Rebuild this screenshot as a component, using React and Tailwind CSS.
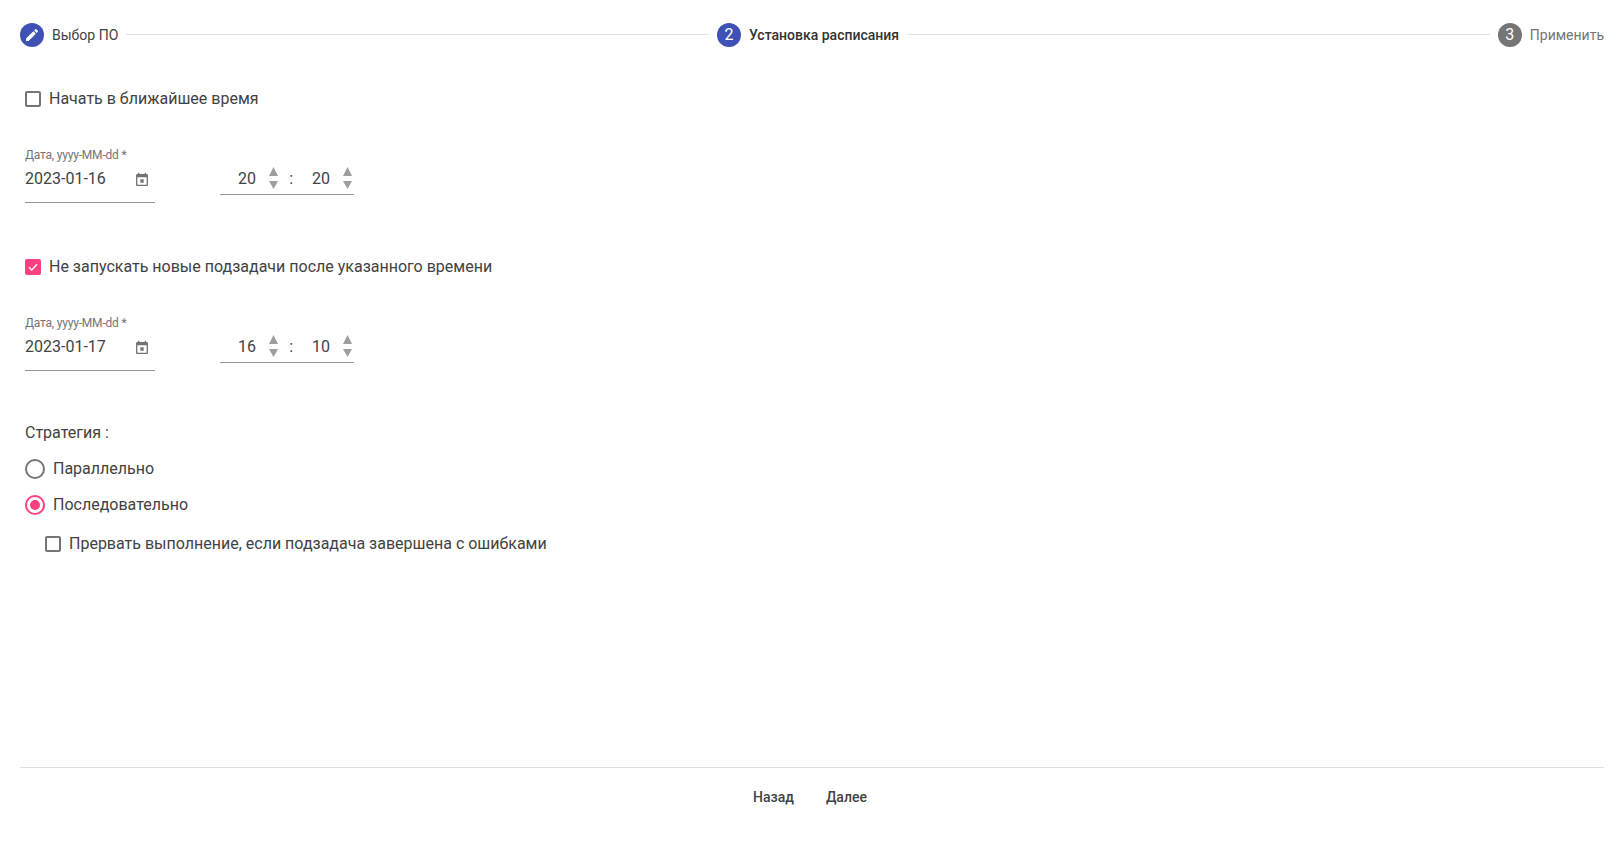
import React from 'react';

const font = { fontFamily: 'Roboto, sans-serif' };

const Step = ({ num, label, state }) => (
  <div className="flex items-center shrink-0">
    <div
      className={`w-6 h-6 rounded-full flex items-center justify-center text-white text-base ${
        state === 'todo' ? 'bg-[#757575]' : 'bg-[#3f51b5]'
      }`}
    >
      {num ? (
        num
      ) : (
        <svg width="16" height="16" viewBox="0 0 24 24" fill="#fff">
          <path d="M3 17.25V21h3.75L17.81 9.94l-3.75-3.75L3 17.25zM20.71 7.04c.39-.39.39-1.02 0-1.41l-2.34-2.34c-.39-.39-1.02-.39-1.41 0l-1.83 1.83 3.75 3.75 1.83-1.83z" />
        </svg>
      )}
    </div>
    <span
      className={`ml-2 text-sm leading-6 ${
        state === 'active'
          ? 'font-medium text-[#333333]'
          : state === 'todo'
            ? 'text-[#757575]'
            : 'text-[#424242]'
      }`}
    >
      {label}
    </span>
  </div>
);

const Checkbox = ({ checked, label }) => (
  <div className="flex items-center h-6">
    {checked ? (
      <div className="w-4 h-4 rounded-[2px] bg-[#ff4081] flex items-center justify-center">
        <svg width="12" height="12" viewBox="0 0 24 24" fill="none" stroke="#fff" strokeWidth="2.5">
          <path d="M4 12.5l5.5 5.5L20 6.5" />
        </svg>
      </div>
    ) : (
      <div className="w-4 h-4 rounded-[2px] border-2 border-[#757575]" />
    )}
    <span className="ml-2 text-base text-[#424242]">{label}</span>
  </div>
);

const Radio = ({ checked, label, className }) => (
  <div className={`flex items-center h-6 ${className}`}>
    <div
      className={`w-5 h-5 rounded-full border-2 flex items-center justify-center ${
        checked ? 'border-[#ff4081]' : 'border-[#757575]'
      }`}
    >
      {checked && <div className="w-2.5 h-2.5 rounded-full bg-[#ff4081]" />}
    </div>
    <span className="ml-2 text-base text-[#424242]">{label}</span>
  </div>
);

const Spin = ({ value }) => (
  <div className="flex items-center">
    <span className="w-9 text-right text-base text-[#424242]">{value}</span>
    <div className="ml-[13px] flex flex-col gap-[5px] -mt-[2px]">
      <svg width="9" height="9" viewBox="0 0 9 9" fill="#9e9e9e" className="block">
        <path d="M4.5 0L9 9H0z" />
      </svg>
      <svg width="9" height="8" viewBox="0 0 9 8" fill="#9e9e9e" className="block">
        <path d="M0 0h9L4.5 8z" />
      </svg>
    </div>
  </div>
);

const Schedule = ({ date, hours, minutes }) => (
  <div className="flex items-start mt-[37px]">
    <div className="w-[130px] h-[55px] border-b border-[#949494]">
      <div className="text-xs leading-[14px] text-[#757575] tracking-[-0.2px]">Дата, yyyy-MM-dd *</div>
      <div className="mt-[5px] flex items-center justify-between h-6 pr-[5px]">
        <span className="text-base text-[#424242]">{date}</span>
        <svg width="16" height="16" viewBox="0 0 24 24" fill="#757575" className="mt-[2px]">
          <path d="M19 3h-1V1h-2v2H8V1H6v2H5c-1.11 0-1.99.9-1.99 2L3 19c0 1.1.89 2 2 2h14c1.1 0 2-.9 2-2V5c0-1.1-.9-2-2-2zm0 16H5V8h14v11zM9.5 11h5v5h-5z" />
        </svg>
      </div>
    </div>
    <div className="ml-[65px] mt-[19px] w-[134px] h-7 border-b border-[#949494] flex items-start">
      <div className="flex items-center h-6">
        <Spin value={hours} />
        <span className="w-4 text-right pr-[1px] text-base text-[#424242]">:</span>
        <Spin value={minutes} />
      </div>
    </div>
  </div>
);

export default function App() {
  return (
    <div className="h-[846px] bg-white flex flex-col overflow-hidden" style={font}>
      {/* Stepper */}
      <div className="flex items-center px-5 pt-[23px]">
        <Step label="Выбор ПО" state="done" />
        <div className="flex-1 h-px bg-[#e0e0e0] mx-2 -mt-[2px]" />
        <Step num="2" label="Установка расписания" state="active" />
        <div className="flex-1 h-px bg-[#e0e0e0] mx-2 -mt-[2px]" />
        <Step num="3" label="Применить" state="todo" />
      </div>

      {/* Form */}
      <div className="pl-[25px] mt-10">
        <Checkbox label="Начать в ближайшее время" />
        <Schedule date="2023-01-16" hours="20" minutes="20" />

        <div className="mt-[52px]">
          <Checkbox checked label="Не запускать новые подзадачи после указанного времени" />
        </div>
        <Schedule date="2023-01-17" hours="16" minutes="10" />

        <div className="mt-[50px] text-base leading-6 text-[#424242]">Стратегия :</div>
        <Radio className="mt-3" label="Параллельно" />
        <Radio className="mt-3" checked label="Последовательно" />
        <div className="mt-[15px] ml-5">
          <Checkbox label="Прервать выполнение, если подзадача завершена с ошибками" />
        </div>
      </div>

      {/* Footer */}
      <div className="mt-auto mx-5 h-[79px] border-t border-[#e0e0e0] flex justify-center gap-8 pt-[17px] pr-[4px]">
        <button className="h-6 text-sm font-medium text-[#424242]">Назад</button>
        <button className="h-6 text-sm font-medium text-[#424242]">Далее</button>
      </div>
    </div>
  );
}
